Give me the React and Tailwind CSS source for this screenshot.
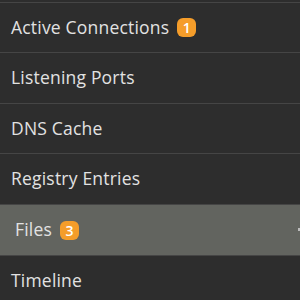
const items = [
  { label: "Active Connections", badge: "1", h: "h-[50px]" },
  { label: "Listening Ports", h: "h-[51px]" },
  { label: "DNS Cache", h: "h-[50px]" },
  { label: "Registry Entries", h: "h-[51px]" },
  { label: "Files", badge: "3", active: true, h: "h-[51px]" },
  { label: "Timeline", h: "h-[51px]" },
];

function Badge({ children }) {
  return (
    <span className="ml-[8px] flex h-[19px] min-w-[19px] items-center justify-center rounded-[6px] bg-[#f59d2a] px-[5px] text-[14px] font-semibold text-white">
      {children}
    </span>
  );
}

export default function App() {
  return (
    <div
      className="h-[300px] w-[300px] overflow-hidden bg-[#2d2d2d] pt-[2px] text-[17.5px] text-[#e2e2e2]"
      style={{ fontFamily: '"Open Sans", "Noto Sans", sans-serif' }}
    >
      {items.map((it) => (
        <div
          key={it.label}
          className={`relative flex items-center border-t border-[#454545] ${it.h} ${
            it.active ? "bg-[#62645f] pl-[15px]" : "pl-[11px]"
          }`}
        >
          <span className="leading-none tracking-[0.2px]">{it.label}</span>
          {it.badge && <Badge>{it.badge}</Badge>}
          {it.active && (
            <span className="absolute right-0 top-[23px] h-[3px] w-[2px] bg-[#bdbdbd]" />
          )}
        </div>
      ))}
    </div>
  );
}
